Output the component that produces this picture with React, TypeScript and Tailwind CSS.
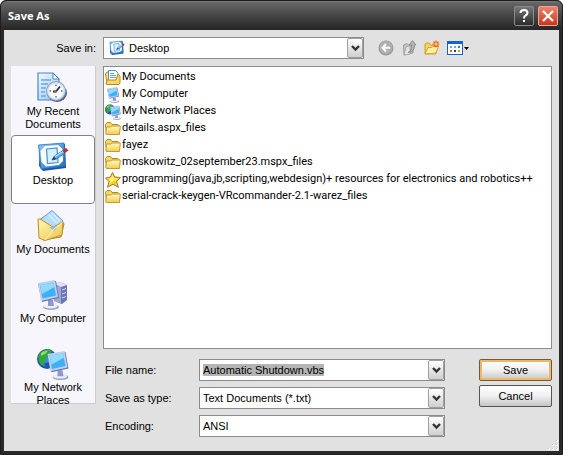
import { useEffect, useRef } from "react";
import type { ReactNode } from "react";
import clsx from "clsx";

type IconProps = { className?: string };

function DesktopIcon({ className }: IconProps) {
  return (
    <svg viewBox="0 0 32 32" className={className} aria-hidden="true">
      <defs>
        <linearGradient id="desk" x1="0" y1="0" x2="1" y2="1">
          <stop offset="0" stopColor="#8cccf8" />
          <stop offset="1" stopColor="#1f6cc4" />
        </linearGradient>
      </defs>
      <path d="M3 5 L28 3 L29 27 L6 30 L2 25 Z" fill="#1b57a5" />
      <path
        d="M1.500 4 L27 2 L28 25 L4 28 Z"
        fill="url(#desk)"
        stroke="#2a72c0"
        strokeWidth="0.8"
      />
      <path
        d="M8 5 L21 4 L25.500 8 L26 20 L22 24 L9 25.500 L4.500 21 L3.500 10 Z"
        fill="#fdfdf0"
      />
      <path
        d="M9.500 8 L20 7 L21 21.500 L10.500 22.500 Z"
        fill="#d6eefd"
        stroke="#3f93d8"
        strokeWidth="1.2"
      />
      <path
        d="M15 19 L17.500 15 L26 9.500 L28 12 L19.500 18 Z"
        fill="#5cb2f0"
        stroke="#1d62ad"
        strokeWidth="0.8"
      />
      <path d="M15 19 L17 15.500 L19 18 Z" fill="#123f7a" />
      <path d="M18 15.500 L26 10.500" stroke="#d9effd" strokeWidth="1" />
      <path d="M25.500 9 L29 7 L31.500 9.500 L28 12 Z" fill="#b9352b" />
    </svg>
  );
}

function RecentIcon({ className }: IconProps) {
  return (
    <svg viewBox="0 0 32 32" className={className} aria-hidden="true">
      <defs>
        <linearGradient id="page" x1="0" y1="0" x2="1" y2="1">
          <stop offset="0" stopColor="#f3faff" />
          <stop offset="1" stopColor="#8fc4f0" />
        </linearGradient>
      </defs>
      <path
        d="M1 1 H16 L22 7 V28 H1 Z"
        fill="url(#page)"
        stroke="#4c86c6"
        strokeWidth="1.2"
      />
      <path d="M16 1 V7 H22 Z" fill="#fff" stroke="#4c86c6" />
      <path
        d="M4 8 H14 M4 12 H11 M4 16 H9 M4 20 H8 M4 24 H9"
        stroke="#69a9de"
        strokeWidth="1.5"
      />
      <ellipse cx="20" cy="21" rx="10" ry="9" fill="#4c5f7c" />
      <circle cx="19" cy="19" r="10" fill="#8ea2bd" />
      <circle cx="19" cy="19" r="9" fill="#d6dfea" />
      <circle cx="19" cy="19" r="7.500" fill="#f9fcff" />
      <path
        d="M19 12.500 V14 M19 24 V25.500 M12.500 19 H14 M24 19 H25.500"
        stroke="#496b96"
        strokeWidth="1.300"
      />
      <path d="M16 19.500 H19 L23 14.500" fill="none" stroke="#1c3252" strokeWidth="1.800" />
      <circle cx="18.500" cy="19.500" r="1.300" fill="#d35b1e" />
    </svg>
  );
}

function OpenFolderIcon({ className }: IconProps) {
  return (
    <svg viewBox="0 0 32 32" className={className} aria-hidden="true">
      <defs>
        <linearGradient id="flap" x1="0" y1="0" x2="1" y2="1">
          <stop offset="0" stopColor="#fff8b8" />
          <stop offset="1" stopColor="#f0c24a" />
        </linearGradient>
      </defs>
      <path
        d="M2 10 L7 7 L12 10 L25 11 L27 14 L24 27 L6 30 Z"
        fill="#f0c450"
        stroke="#b88622"
      />
      <path d="M15 0.500 L26 11 L20 24 L4 9 Z" fill="#b6ddfa" stroke="#699fd3" />
      <path
        d="M15 3 L23 11 M12 5 L21 14"
        stroke="#e6f5ff"
        strokeWidth="1.500"
        strokeDasharray="2 1"
      />
      <path
        d="M1 9 L3 9 L16 17 L26 12 L25 25 L8 30.500 L2 28 Z"
        fill="url(#flap)"
        stroke="#c08f27"
      />
      <path d="M12.500 17.500 L20.500 15.500 L17.500 21 Z" fill="#86bee9" />
      <path d="M8 30 L17 19 L25.500 12.500" fill="none" stroke="#fff9cf" />
    </svg>
  );
}

function Monitor() {
  return (
    <g>
      <ellipse cx="14" cy="28" rx="8" ry="3" fill="#9aa3c4" />
      <ellipse cx="13.500" cy="27" rx="7" ry="2.500" fill="#eceff9" />
      <path d="M11 21 L16 21 L17 27 L11 27 Z" fill="#8e99c5" />
      <path d="M1 5 L19 2 L22 19 L5 23 Z" fill="#6574ae" />
      <path d="M1 4 L18 1 L21 18 L4 22 Z" fill="#c3cdec" />
      <path d="M3 6 L16.500 3.500 L19 16.500 L5.500 19.500 Z" fill="#3fb0f5" />
      <path d="M3 6 L16.500 3.500 L17.500 8 L5 15 Z" fill="#8edbfe" />
    </g>
  );
}

function ComputerIcon({ className }: IconProps) {
  return (
    <svg viewBox="0 0 32 32" className={className} aria-hidden="true">
      <path d="M17 5 L23 3 L30 6 L30 21 L25 25 L17 22 Z" fill="#6b76b4" />
      <path d="M17 6 L24 8 L24 24 L17 22 Z" fill="#9ea8d6" />
      <path d="M17 5 L23 3 L30 6 L24 8 Z" fill="#dfe3f5" />
      <path d="M25 11 L29 9.500 M25 15 L29 13.500 M25 19 L29 17.500" stroke="#d3d9f5" />
      <Monitor />
    </svg>
  );
}

function NetworkIcon({ className }: IconProps) {
  return (
    <svg viewBox="0 0 32 32" className={className} aria-hidden="true">
      <circle cx="10" cy="11" r="10" fill="#1b55b5" />
      <circle cx="9" cy="9" r="6" fill="#3c8be2" />
      <path
        d="M2 6 Q7 0 13 1.500 L15 4 L10 7 L11 10 L7 13 L8 18 L4 17 Q0 12 2 6 Z"
        fill="#35a63d"
      />
      <path d="M4 5 Q8 2 11 3 L8 6 L4 8 Z" fill="#8ddc70" />
      <g transform="translate(9.500 2) scale(1 0.97)">
        <Monitor />
      </g>
    </svg>
  );
}

function SmallComputerIcon({ className }: IconProps) {
  return (
    <svg viewBox="0 0 32 32" className={className} aria-hidden="true">
      <g transform="translate(3 -1) scale(1.150 1.060)">
        <Monitor />
      </g>
    </svg>
  );
}

function FolderIcon({ className }: IconProps) {
  return (
    <svg viewBox="0 0 16 16" className={className} aria-hidden="true">
      <defs>
        <linearGradient id="folder" x1="0" y1="0" x2="0" y2="1">
          <stop offset="0" stopColor="#fffbc0" />
          <stop offset="1" stopColor="#f3cb50" />
        </linearGradient>
      </defs>
      <path
        d="M0.500 3.500 L2 1.500 H5.500 L7 3.500 H13 L14 4.500 V13 H1.500 Z"
        fill="#f6d868"
        stroke="#b58a20"
      />
      <path
        d="M0.800 13 L1.500 6 H5.500 L7 5 H15.300 L14.500 13.500 H2 Z"
        fill="url(#folder)"
        stroke="#c39a30"
      />
    </svg>
  );
}

function DocumentsIcon({ className }: IconProps) {
  return (
    <svg viewBox="0 0 16 16" className={className} aria-hidden="true">
      <path d="M0.500 4 L2 2 H6 V14 H2 Z" fill="#f8df78" stroke="#b58a20" />
      <path d="M3.500 0.500 H10.500 L13 3 V12 H3.500 Z" fill="#fafdff" stroke="#5b92cc" />
      <path d="M5 3.500 H9 M5 5.500 H11 M5 7.500 H11" stroke="#6aa9df" />
      <path
        d="M1 14 L2 10 H11 L13 4 L15 6 V13 L14 14.500 H2 Z"
        fill="#f7d867"
        stroke="#b58a20"
      />
    </svg>
  );
}

function StarIcon({ className }: IconProps) {
  return (
    <svg viewBox="0 0 16 16" className={className} aria-hidden="true">
      <path
        d="M7.500 0.500 L9.800 5 L15.500 5.500 L11.500 9.500 L13.500 15.300 L8 12.300 L2.500 15.300 L4 9.500 L0.500 6 L5.300 5 Z"
        fill="#fccb24"
        stroke="#a07c33"
      />
      <path d="M7.500 2.500 L9 6.500 L13 6.700 L9 9 L7 10 L4 13 L5.500 9 L3 6.500 L6 6.300 Z" fill="#fff07a" />
    </svg>
  );
}

function BackIcon() {
  return (
    <svg viewBox="0 0 16 16" className="size-4" aria-hidden="true">
      <circle cx="8" cy="8" r="7.500" fill="#999" />
      <circle cx="8" cy="7.500" r="6.500" fill="#b0b0b0" />
      <path
        d="M8 4 L4.500 7.800 L8 11.500 M5 7.800 H12"
        fill="none"
        stroke="#fff"
        strokeWidth="2"
      />
    </svg>
  );
}

function UpIcon() {
  return (
    <svg viewBox="0 0 16 16" className="size-4" aria-hidden="true">
      <path d="M2.500 5 L6 3.500 L7 5 H12 V13 L3 15 Z" fill="#c4c4c4" stroke="#a0a0a0" />
      <path d="M3 15 L5 7 L9 5.500 L9 14 Z" fill="#e4e4e4" stroke="#aaa" />
      <path
        d="M7 12.500 Q11 11 10.500 5 H8 L11.500 0.500 L15 5 H13.500 Q14 12 7 12.500 Z"
        fill="#b4b4b4"
        stroke="#828282"
        strokeWidth="0.800"
      />
    </svg>
  );
}

function NewFolderIcon() {
  return (
    <svg viewBox="0 0 16 16" className="size-4" aria-hidden="true">
      <path d="M1 4 L2 3 H5 L6.500 5 H12 V14 H1 Z" fill="#f5d160" stroke="#cf9f34" />
      <path d="M1 14 L4 7.500 H8 L9 6.500 H14.500 L12 13 Z" fill="#fff0a0" stroke="#d6a535" />
      <path
        d="M12 0.500 V7.500 M8.500 4 H15.500 M9.500 1.500 L14.500 6.500 M14.500 1.500 L9.500 6.500"
        stroke="#ec5a24"
        strokeWidth="1.200"
      />
      <circle cx="12" cy="4" r="1.500" fill="#ffd54a" />
    </svg>
  );
}

function ViewIcon() {
  return (
    <svg viewBox="0 0 24 16" className="h-4 w-6" aria-hidden="true">
      <rect x="0.500" y="1.500" width="15" height="13" fill="#fff" stroke="#1466cf" />
      <rect x="0" y="1" width="16" height="3" fill="#1466cf" />
      <path d="M3 6 h2 v2 h-2 z M7 6 h2 v2 h-2 z" fill="#7aa7d8" />
      <path d="M11 6 h2 v2 h-2 z" fill="#3f9a4f" />
      <path d="M3 10 h2 v2 h-2 z" fill="#e0603c" />
      <path d="M7 10 h2 v2 h-2 z" fill="#1c3f9c" />
      <path d="M11 10 h2 v2 h-2 z" fill="#c4a22e" />
      <path d="M17 7 H22 L19.500 10 Z" fill="#000" />
    </svg>
  );
}

function Chevron() {
  return (
    <svg viewBox="0 0 9 7" className="h-[7px] w-[9px]" aria-hidden="true">
      <path d="M1 1 L4.500 4.500 L8 1" fill="none" stroke="#333" strokeWidth="2.400" />
    </svg>
  );
}

function ResizeGrip() {
  return (
    <svg viewBox="0 0 12 12" className="size-3" aria-hidden="true">
      <path
        d="M9 1h2v2h-2z M5 5h2v2h-2z M9 5h2v2h-2z M1 9h2v2h-2z M5 9h2v2h-2z M9 9h2v2h-2z"
        fill="#fff"
      />
      <path
        d="M9 1h1v1h-1z M5 5h1v1h-1z M9 5h1v1h-1z M1 9h1v1h-1z M5 9h1v1h-1z M9 9h1v1h-1z"
        fill="#c4c4c4"
      />
    </svg>
  );
}

const PLACES = [
  { label: "My Recent Documents", Icon: RecentIcon },
  { label: "Desktop", Icon: DesktopIcon },
  { label: "My Documents", Icon: OpenFolderIcon },
  { label: "My Computer", Icon: ComputerIcon },
  { label: "My Network Places", Icon: NetworkIcon },
];

const FILES = [
  { name: "My Documents", Icon: DocumentsIcon },
  { name: "My Computer", Icon: SmallComputerIcon },
  { name: "My Network Places", Icon: NetworkIcon },
  { name: "details.aspx_files", Icon: FolderIcon },
  { name: "fayez", Icon: FolderIcon },
  { name: "moskowitz_02september23.mspx_files", Icon: FolderIcon },
  {
    name: "programming(java,jb,scripting,webdesign)+ resources for electronics and robotics++",
    Icon: StarIcon,
  },
  { name: "serial-crack-keygen-VRcommander-2.1-warez_files", Icon: FolderIcon },
];

const TOOLS = [
  { label: "Back", Icon: BackIcon },
  { label: "Up One Level", Icon: UpIcon },
  { label: "Create New Folder", Icon: NewFolderIcon },
  { label: "View Menu", Icon: ViewIcon },
];

// Frame shared by the drop-downs and the file name box
function Combo({ className, children }: { className?: string; children: ReactNode }) {
  return (
    <div
      className={clsx(
        "relative h-[22px] border border-[#8c8c8c] bg-white",
        className,
      )}
    >
      {children}
      <span className="pointer-events-none absolute inset-y-0 right-0 flex w-4 items-center justify-center rounded-xs border border-[#a0a0a0] bg-linear-to-b from-white to-[#cfcfcf]">
        <Chevron />
      </span>
    </div>
  );
}

const FIELD =
  "block h-full w-full appearance-none bg-transparent pr-4 pl-[3px] outline-none";

const BUTTON =
  "h-[22px] rounded-xs border bg-linear-to-b from-white via-[#f0f0f0] to-[#c6c6c6]";

export default function App() {
  const nameRef = useRef<HTMLInputElement>(null);

  useEffect(() => {
    nameRef.current?.focus();
    nameRef.current?.select();
  }, []);

  return (
    <main className="flex min-h-screen flex-col rounded-t-md border border-[#1c1c1c] bg-[#2a2a2a] font-['Liberation_Sans',sans-serif] text-[11px] text-black">
      {/* title bar */}
      <header className="flex h-[29px] items-center justify-between rounded-t-md border-t border-[#777] bg-linear-to-b from-[#686868] via-[#444] to-[#262626] pr-1 pl-[7px]">
        <h1 className="font-['Noto_Sans',sans-serif] font-bold text-white">
          Save As
        </h1>
        <div className="flex gap-1">
          <button
            aria-label="Help"
            className="flex size-5 items-center justify-center rounded-xs border border-[#8a8a8a] bg-linear-to-b from-[#777] to-[#2c2c2c]"
          >
            <svg viewBox="0 0 16 16" className="size-4" aria-hidden="true">
              <path
                d="M4.500 5 Q4.500 2 8 2 Q11.500 2 11.500 5 Q11.500 6.500 9.500 7.500 Q8 8.500 8 10.500"
                fill="none"
                stroke="#fff"
                strokeWidth="2"
              />
              <rect x="7" y="12" width="2" height="2" fill="#fff" />
            </svg>
          </button>
          <button
            aria-label="Close"
            className="flex size-5 items-center justify-center rounded-xs border border-[#e8a99c] bg-linear-to-b from-[#ee8468] to-[#c9331a]"
          >
            <svg viewBox="0 0 16 16" className="size-4" aria-hidden="true">
              <path d="M3 3 L13 13 M13 3 L3 13" stroke="#fff" strokeWidth="2.200" />
            </svg>
          </button>
        </div>
      </header>

      <div className="relative mx-[3px] mb-[3px] flex flex-1 flex-col bg-[#e1e1e1] pt-[7px] pr-[7px] pl-[7px]">
        {/* location row */}
        <div className="flex items-center">
          <label htmlFor="save-in" className="w-[92px] pr-[7px] text-right">
            Save in:
          </label>
          <Combo className="w-[261px]">
            <DesktopIcon className="pointer-events-none absolute top-[2px] left-[5px] size-4" />
            <select id="save-in" className={clsx(FIELD, "indent-[22px]")}>
              <option>Desktop</option>
            </select>
          </Combo>
          <div className="ml-[14px] flex gap-[7px]">
            {TOOLS.map(({ label, Icon }) => (
              <button key={label} aria-label={label}>
                <Icon />
              </button>
            ))}
          </div>
        </div>

        <div className="mt-[7px] flex flex-1 gap-[7px]">
          {/* places bar */}
          <nav className="mb-[47px] flex w-[85px] shrink-0 flex-col border-r border-b border-[#cdcdcd] bg-[#f6f6fc]">
            {PLACES.map(({ label, Icon }) => (
              <button
                key={label}
                className={clsx(
                  "flex flex-col items-center gap-px border px-1 pt-[5px] text-center leading-[13px]",
                  label === "My Network Places" ? "h-[60px]" : "h-[69px]",
                  label === "Desktop"
                    ? "rounded-sm border-[#80808c] bg-white"
                    : "border-transparent",
                )}
              >
                <Icon className="size-8 shrink-0" />
                <span>{label}</span>
              </button>
            ))}
          </nav>

          <div className="flex min-w-0 flex-1 flex-col">
            <ul className="flex-1 border border-[#8c8c8c] bg-white pt-[2px] pl-px font-['Roboto',sans-serif]">
              {FILES.map(({ name, Icon }) => (
                <li key={name}>
                  <button className="flex h-[17px] items-center gap-px whitespace-nowrap">
                    <Icon className="size-4 shrink-0" />
                    {name}
                  </button>
                </li>
              ))}
            </ul>

            <form
              className="flex justify-between pt-[10px] pb-[14px]"
              onSubmit={(e) => e.preventDefault()}
            >
              <div className="grid grid-cols-[96px_246px] items-center gap-y-[6px]">
                <label htmlFor="file-name" className="pl-[2px]">
                  File name:
                </label>
                <Combo>
                  <input
                    id="file-name"
                    ref={nameRef}
                    defaultValue="Automatic Shutdown.vbs"
                    className={clsx(
                      FIELD,
                      "selection:bg-[#b5b5b5] selection:text-black",
                    )}
                  />
                </Combo>
                <label htmlFor="save-type" className="pl-[2px]">
                  Save as type:
                </label>
                <Combo>
                  <select id="save-type" className={FIELD}>
                    <option>Text Documents (*.txt)</option>
                  </select>
                </Combo>
                <label htmlFor="encoding" className="pl-[2px]">
                  Encoding:
                </label>
                <Combo>
                  <select id="encoding" className={FIELD}>
                    <option>ANSI</option>
                  </select>
                </Combo>
              </div>
              <div className="flex w-[73px] flex-col gap-1">
                <button
                  type="submit"
                  className={clsx(
                    BUTTON,
                    "border-[#6b5a3c] inset-ring-2 inset-ring-[#edb765]",
                  )}
                >
                  Save
                </button>
                <button type="button" className={clsx(BUTTON, "border-[#555]")}>
                  Cancel
                </button>
              </div>
            </form>
          </div>
        </div>
        <span className="absolute right-0 bottom-0">
          <ResizeGrip />
        </span>
      </div>
    </main>
  );
}
